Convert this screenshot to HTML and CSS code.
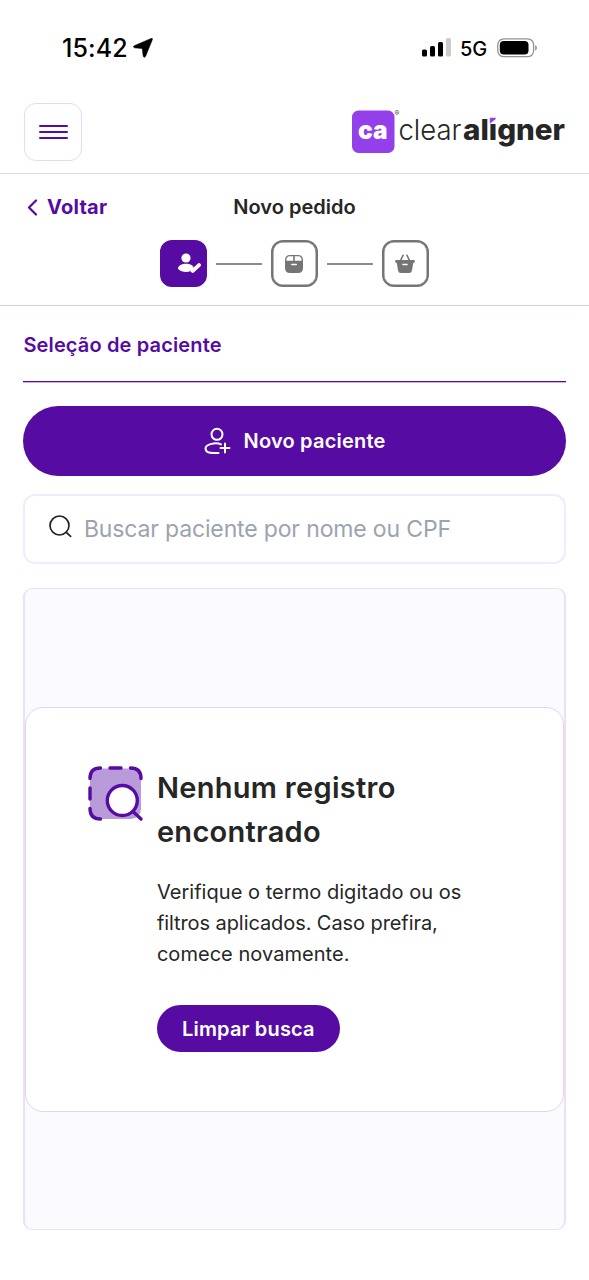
FILE: index.html
```html
<!DOCTYPE html>
<html lang="pt-BR">
<head>
<meta charset="utf-8">
<title>Novo pedido</title>
<link rel="stylesheet" href="styles.css">
</head>
<body>
<div class="status">
  <div class="status-left">
    <span class="time">15:42</span>
    <svg width="20" height="20" viewBox="0 0 20 20"><path d="M18.3 .4Q19.8 0 19.3 1.700L12.600 18.200Q11.200 20.400 10.200 18.300L9.400 11.200Q9.300 10.500 8.600 10.400L1.500 9.800Q-.6 9 1.300 7.700Z" stroke="#000" stroke-width=".6"/></svg>
  </div>
  <div class="status-right">
    <svg class="signal" width="29" height="19" viewBox="0 0 29 19"><rect x="0" y="11.5" width="5" height="7" rx="1.5"/><rect x="8" y="8" width="5" height="10.5" rx="1.5"/><rect x="16" y="4" width="5" height="14.5" rx="1.5"/><rect x="24" y="0" width="5" height="18.5" rx="1.5" fill="#ccc"/></svg>
    <span class="net">5G</span>
    <svg class="battery" width="41" height="20" viewBox="0 0 41 20"><rect x=".8" y=".8" width="35.8" height="17.9" rx="6" fill="none" stroke="#929292" stroke-width="1.3"/><rect x="2.8" y="3" width="28.7" height="13.5" rx="4"/><path d="M38.2 7Q40 8 40 9.8T38.2 12.7Z" fill="#929292"/></svg>
  </div>
</div>
<header class="header">
  <button class="menu" aria-label="Menu"><svg width="29" height="16" viewBox="0 0 29 16" fill="none" stroke="#560ba3" stroke-width="2" stroke-linecap="round"><path d="M1 1.9h27M1 8h27M1 14h27"/></svg></button>
  <svg class="logo" width="213" height="46" viewBox="0 0 213 46">
    <rect x="0" y="3.500" width="42.5" height="42.5" rx="6.5" fill="#9340ea"/>
    <text class="logo-ca" x="6" y="31.5" textLength="29.500" lengthAdjust="spacingAndGlyphs">ca</text>
    <text class="logo-reg" x="42.500" y="9">®</text>
    <text class="logo-clear" x="46.5" y="32.500" textLength="63" lengthAdjust="spacingAndGlyphs">clear</text>
    <text class="logo-aligner" x="111" y="32.500" textLength="102" lengthAdjust="spacingAndGlyphs">alıgner</text>
    <path d="M137.800 10.800h6.200l-.8 1.800-5.400 4.200z" fill="#9340ea"/>
  </svg>
</header>
<section class="order">
  <div class="order-bar">
    <a class="back"><svg width="11" height="17" viewBox="0 0 11 17" fill="none" stroke="#560ba3" stroke-width="2.2" stroke-linecap="round" stroke-linejoin="round"><path d="M9 1.5 2 8.5l7 7"/></svg><span>Voltar</span></a>
    <h1 class="order-title">Novo pedido</h1>
  </div>
  <div class="steps">
    <div class="step step-active"><svg width="24" height="21" viewBox="0 0 24 21" fill="#fff"><circle cx="9" cy="5" r="4.6"/><path d="M1 15.5C1 9 17 9 17 15.5 15 20 3 20 1 15.5z"/><path d="m13.5 15.2 2.3 2.7 6.2-5.8" fill="none" stroke="#560ba3" stroke-opacity=".25" stroke-width="5"/><path d="m13.5 15.2 2.3 2.7 6.2-5.8" fill="none" stroke="#fff" stroke-width="3.8" stroke-linecap="round" stroke-linejoin="round"/></svg></div>
    <span class="link"></span>
    <div class="step"><svg width="20" height="20" viewBox="0 0 20 20"><path d="M6 1h8q5 0 5 5.5V14q0 5-5 5H6q-5 0-5-5V6.500Q1 1 6 1z" fill="#757575"/><path d="M5.500 2.300h3.700v4.500H2.300q.2-4.400 3.200-4.500zM10.800 2.300h3.700q3 .1 3.200 4.500h-6.900z" fill="#fff"/><path d="M7.800 10.500h4.400" stroke="#fff" stroke-width="1.6" stroke-linecap="round"/></svg></div>
    <span class="link"></span>
    <div class="step"><svg width="20" height="20" viewBox="0 0 20 20"><path d="M1 6h18q1 0 .8 1.500-.2 1.500-1.600 1.500L17 16.500q-.4 2.500-3 2.500H6q-2.600 0-3-2.500L1.800 9Q.4 9 .2 7.500 0 6 1 6z" fill="#757575"/><path d="M5.500 6.500 8 1.300M14.500 6.500 12 1.300" stroke="#757575" stroke-width="1.600" stroke-linecap="round"/><path d="M8 10.500h4" stroke="#fff" stroke-width="1.600" stroke-linecap="round"/></svg></div>
  </div>
</section>
<main class="main">
  <h2 class="section-title"><span>Seleção de paciente</span></h2>
  <button class="new-patient"><svg width="27" height="28" viewBox="0 0 27 28" fill="none" stroke="#fff" stroke-width="2" stroke-linecap="round" stroke-linejoin="round"><circle cx="13" cy="7.300" r="5.500"/><path d="M17 17.400C12 15 1.500 17 1.500 21.500c0 3.500 4.500 4.500 8 4.500h5"/><path d="M21 16.500v9M16.500 21h9"/></svg><span>Novo paciente</span></button>
  <div class="search"><svg width="23" height="23" viewBox="0 0 23 23" fill="none" stroke="#222" stroke-width="1.700" stroke-linecap="round"><circle cx="10.500" cy="10.500" r="9.500"/><path d="m17.300 17.300 4.300 4"/></svg><span>Buscar paciente por nome ou CPF</span></div>
  <div class="panel">
    <div class="card">
      <svg class="empty-icon" width="56" height="56" viewBox="0 0 56 56" fill="none" stroke="#560ba3" stroke-width="3.400" stroke-linecap="round"><rect x="2" y="2.500" width="51" height="50.500" rx="10" fill="#b99bd9" stroke="none"/><path d="M2 12.500Q2 2 12.500 2M22 2h11M42.500 2Q53 2 53 12.500M2 22v11M2 42.500Q2 53 12.500 53"/><circle cx="34.300" cy="34.500" r="15" fill="#fff"/><path d="m45.500 46 7.500 7"/></svg>
      <div class="empty-body">
        <h3>Nenhum registro<br>encontrado</h3>
        <p>Verifique o termo digitado ou os<br><span class="tight">filtros aplicados. Caso prefira,</span><br>comece novamente.</p>
        <button class="clear"><span>Limpar busca</span></button>
      </div>
    </div>
  </div>
</main>
</body>
</html>
```
FILE: styles.css
```css
* { box-sizing: border-box; }
body { margin: 0; background: #fff; color: #262626; font-family: Inter, "Liberation Sans", sans-serif; }
svg { display: block; flex: none; }
button { font: inherit; border: 0; padding: 0; }
h1, h2, h3, p { margin: 0; }
.status { height: 97px; display: flex; justify-content: space-between; padding: 0 51px 0 62px; color: #000; }
.status-left { display: flex; gap: 6px; padding-top: 38px; height: 60px; }
.time { font-size: 25px; line-height: 20px; font-weight: 500; letter-spacing: .1px; width: 65px; white-space: nowrap; }
.status-right { display: flex; padding-top: 38px; }
.net { font-size: 20px; line-height: 22px; font-weight: 500; margin-left: 9px; width: 27px; letter-spacing: -.2px; }
.battery { margin-left: 10px; }
.header { height: 77px; border-bottom: 1px solid #e2d8ee; padding: 6px 24px 0; display: flex; justify-content: space-between; }
.menu { width: 58px; height: 58px; border: 1.5px solid #e6d7fb; border-radius: 12px; background: #fff; display: flex; align-items: center; justify-content: center; }
.logo { margin-top: 4px; overflow: visible; }
.logo-ca { font: 900 26px Inter, sans-serif; fill: #fff; }
.logo-reg { font: 600 7px Inter, sans-serif; fill: #555; }
.logo-clear { font: 300 29px Inter, sans-serif; fill: #262626; }
.logo-aligner { font: 800 29px Inter, sans-serif; fill: #262626; }
.order { height: 132px; border-bottom: 1px solid #d9c9ec; padding-top: 20px; }
.order-bar { display: grid; grid-template-columns: 1fr auto 1fr; height: 26px; padding: 0 24px; align-items: center; }
.back { display: flex; align-items: center; gap: 9px; padding-left: 3px; color: #560ba3; font-size: 20px; font-weight: 700; letter-spacing: .25px; }
.order-title { font-size: 20px; font-weight: 600; white-space: nowrap; }
.steps { display: flex; align-items: center; justify-content: center; gap: 9px; margin: 20px .3px 0 0; }
.step { width: 46.6px; height: 47px; border: 2.5px solid #757575; border-radius: 12px; display: flex; align-items: center; justify-content: center; box-shadow: inset 0 0 0 .5px #757575; }
.step-active { background: #560ba3; border-color: #560ba3; box-shadow: none; padding-left: 12px; }
.link { width: 46.5px; height: 2px; background: #8c8c8c; }
.main { padding: 0 23.4px; }
.section-title { height: 76px; border-bottom: 1px solid #560ba3; box-shadow: 0 1px 0 #c9b0e3; color: #560ba3; font-size: 20px; line-height: 26px; font-weight: 600; padding-top: 26px; letter-spacing: .14px; }
.new-patient { width: 100%; height: 70px; margin-top: 24px; border-radius: 35px; background: #560ba3; color: #fff; font-size: 20px; font-weight: 600; letter-spacing: .2px; display: flex; align-items: center; justify-content: center; gap: 13px; }
.search { margin-top: 18px; height: 70px; border: 2px solid #f3eafe; border-radius: 12px; padding: 0 23.500px; display: flex; align-items: center; gap: 12px; color: #9ca3af; font-size: 23px; letter-spacing: -.15px; white-space: nowrap; }
.search svg { margin-top: -6px; }
.panel { margin-top: 24px; height: 642px; border: 2px solid #ebe1f6; border-top-width: 1px; border-bottom-width: 1px; border-radius: 9px; background: #fbfaff; padding-top: 118px; }
.card { height: 405px; background: #fff; border: 1.5px solid #e2d4f1; border-radius: 18px; padding: 58px 0 0 61.5px; display: flex; gap: 13px; }
.empty-body { white-space: nowrap; }
h3 { font-size: 29px; line-height: 44px; font-weight: 600; letter-spacing: .3px; }
p { margin-top: 23px; font-size: 20px; line-height: 31px; letter-spacing: .04px; }
.tight { letter-spacing: -.08px; }
.clear { margin-top: 35px; width: 183px; height: 47px; border-radius: 24px; background: #560ba3; color: #fff; font-size: 20px; font-weight: 600; letter-spacing: .15px; }
```
